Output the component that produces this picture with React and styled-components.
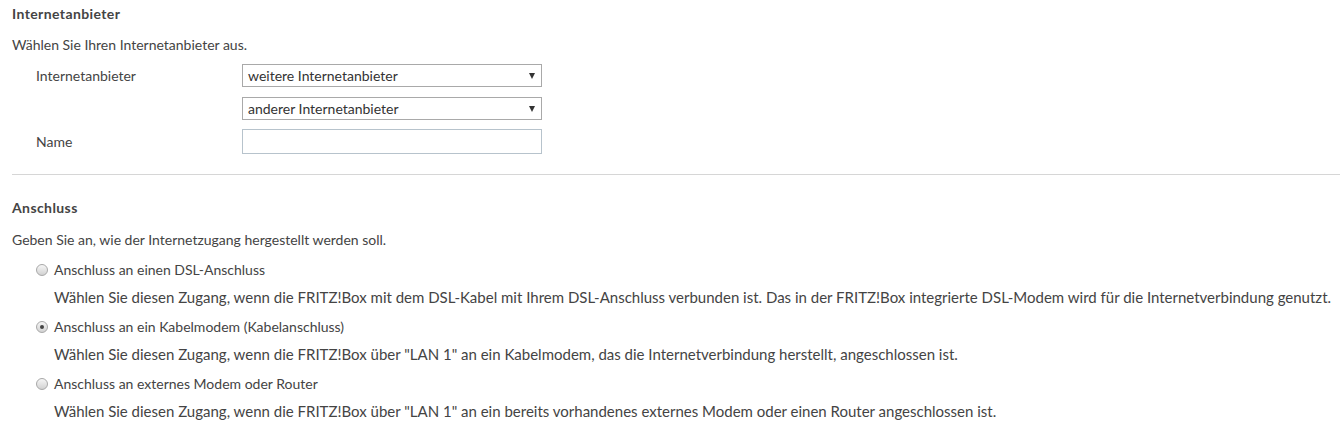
import React from 'react';
import styled, { createGlobalStyle } from 'styled-components';

const GlobalStyle = createGlobalStyle`
    body {
        margin: 0;
        background: #fff;
        font-family: Lato, "Open Sans", sans-serif;
        font-size: 14px;
        color: #444;
    }
`;

const Page = styled.div`
    padding: 4px 0 0 12px;
`;

const Section = styled.section`
    display: flex;
    flex-direction: column;
`;

const Heading = styled.h3`
    margin: 0;
    font-size: 14px;
    font-weight: 700;
    letter-spacing: 0.4px;
    line-height: 20px;
`;

const Intro = styled.p`
    margin: ${p => p.$top || 11}px 0 0;
    line-height: 20px;
`;

const FormGrid = styled.div`
    display: grid;
    grid-template-columns: 206px 300px;
    row-gap: 10px;
    margin: 9px 0 0 24px;
    align-items: center;
`;

const Label = styled.label`
    line-height: 20px;
`;

const SelectBox = styled.div`
    position: relative;
    grid-column: 2;
    height: 23px;
    box-sizing: border-box;
    border: 1px solid #a9a9a9;
    background: #fff;
    padding: 0 0 0 5px;
    line-height: 21px;
    color: #333;
`;

const Arrow = styled.span`
    position: absolute;
    right: 6px;
    top: 8px;
    width: 0;
    height: 0;
    border-left: 3px solid transparent;
    border-right: 3px solid transparent;
    border-top: 6px solid #333;
`;

const TextInput = styled.input`
    grid-column: 2;
    height: 25px;
    box-sizing: border-box;
    border: 1px solid #b7c3cc;
    background: #fff;
    margin: -1px 0 0;
    outline: none;
`;

const Divider = styled.hr`
    margin: 20px 0 23px;
    border: 0;
    border-top: 1px solid #d6d6d6;
`;

const Options = styled.div`
    display: flex;
    flex-direction: column;
    gap: 10px;
    margin: 10px 0 0 24px;
`;

const Option = styled.div`
    display: flex;
    flex-direction: column;
    gap: 7px;
`;

const OptionLabel = styled.label`
    display: flex;
    align-items: center;
    gap: 6px;
    line-height: 20px;
`;

const Radio = styled.span`
    position: relative;
    width: 12px;
    height: 12px;
    box-sizing: border-box;
    border-radius: 50%;
    border: 1px solid #a8a8a8;
    background: linear-gradient(#f6f6f6, #d2d2d2);
    flex-shrink: 0;
    &::after {
        content: '';
        display: ${p => (p.$checked ? 'block' : 'none')};
        position: absolute;
        left: 3px;
        top: 3px;
        width: 4px;
        height: 4px;
        border-radius: 50%;
        background: #444;
    }
`;

const Hint = styled.div`
    padding-left: 18px;
    font-size: 15px;
    line-height: 20px;
    white-space: nowrap;
`;

const Select = ({ value }) => <SelectBox>
    {value}
    <Arrow />
</SelectBox>;

const options = [
    {
        label: 'Anschluss an einen DSL-Anschluss',
        hint: 'Wählen Sie diesen Zugang, wenn die FRITZ!Box mit dem DSL-Kabel mit Ihrem DSL-Anschluss verbunden ist. Das in der FRITZ!Box integrierte DSL-Modem wird für die Internetverbindung genutzt.',
    },
    {
        label: 'Anschluss an ein Kabelmodem (Kabelanschluss)',
        hint: 'Wählen Sie diesen Zugang, wenn die FRITZ!Box über "LAN 1" an ein Kabelmodem, das die Internetverbindung herstellt, angeschlossen ist.',
        checked: true,
    },
    {
        label: 'Anschluss an externes Modem oder Router',
        hint: 'Wählen Sie diesen Zugang, wenn die FRITZ!Box über "LAN 1" an ein bereits vorhandenes externes Modem oder einen Router angeschlossen ist.',
    },
];

const App = () => <Page>
    <GlobalStyle />
    <Section>
        <Heading>Internetanbieter</Heading>
        <Intro>Wählen Sie Ihren Internetanbieter aus.</Intro>
        <FormGrid>
            <Label>Internetanbieter</Label>
            <Select value="weitere Internetanbieter" />
            <Select value="anderer Internetanbieter" />
            <Label>Name</Label>
            <TextInput type="text" />
        </FormGrid>
    </Section>
    <Divider />
    <Section>
        <Heading>Anschluss</Heading>
        <Intro $top={12}>Geben Sie an, wie der Internetzugang hergestellt werden soll.</Intro>
        <Options>
            {options.map(o => <Option key={o.label}>
                <OptionLabel><Radio $checked={o.checked} />{o.label}</OptionLabel>
                <Hint>{o.hint}</Hint>
            </Option>)}
        </Options>
    </Section>
</Page>;

export default App;
